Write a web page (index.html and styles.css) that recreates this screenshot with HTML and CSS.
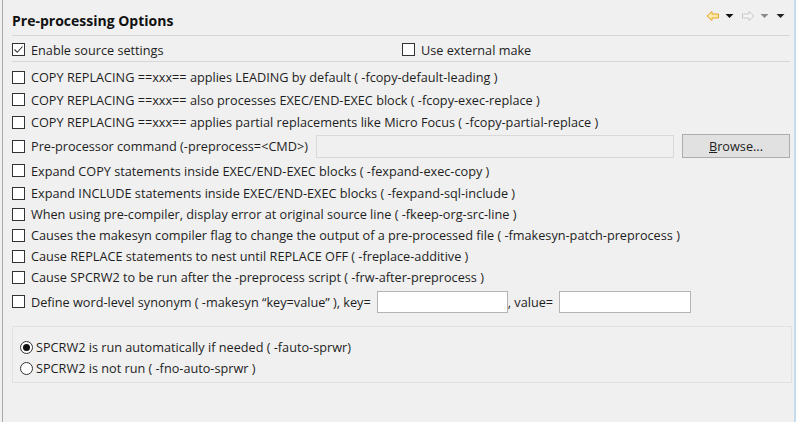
FILE: index.html
```html
<!DOCTYPE html>
<html>
<head>
<meta charset="utf-8">
<link rel="stylesheet" href="styles.css">
</head>
<body>
<div class="page">
  <div class="header">
    <div class="title">Pre-processing Options</div>
    <div class="tools">
      <svg class="ic" width="14" height="12" viewBox="0 0 14 12"><path d="M1 6 L6 1.5 V4 H12.5 V8 H6 V10.5 Z" fill="#fde9a6" stroke="#e2a52a" stroke-width="1"/></svg>
      <svg class="tri" width="9" height="6" viewBox="0 0 9 6"><path d="M0.5 1 H8.5 L4.5 5 Z" fill="#111"/></svg>
      <svg class="ic" width="14" height="12" viewBox="0 0 14 12"><path d="M13 6 L8 1.5 V4 H1.5 V8 H8 V10.5 Z" fill="#f4f4f4" stroke="#c8c8c8" stroke-width="1"/></svg>
      <svg class="tri" width="9" height="6" viewBox="0 0 9 6"><path d="M0.5 1 H8.5 L4.5 5 Z" fill="#8a8a8a"/></svg>
      <svg class="tri" width="9" height="6" viewBox="0 0 9 6"><path d="M0.5 1 H8.5 L4.5 5 Z" fill="#222"/></svg>
    </div>
  </div>
  <div class="toprow">
    <label class="cb cb-enable"><span class="box checked"><svg width="11" height="11" viewBox="0 0 11 11"><path d="M1.5 5.5 L4.3 8.3 L9.5 2.5" fill="none" stroke="#333" stroke-width="1.1"/></svg></span>Enable source settings</label>
    <label class="cb"><span class="box"></span>Use external make</label>
  </div>
  <div class="opts">
    <label class="cb r1"><span class="box"></span>COPY REPLACING ==xxx== applies LEADING by default ( -fcopy-default-leading )</label>
    <label class="cb r1"><span class="box"></span>COPY REPLACING ==xxx== also processes EXEC/END-EXEC block ( -fcopy-exec-replace )</label>
    <label class="cb r1"><span class="box"></span>COPY REPLACING ==xxx== applies partial replacements like Micro Focus ( -fcopy-partial-replace )</label>
    <div class="cmdrow">
      <label class="cb cmdlabel"><span class="box"></span>Pre-processor command (-preprocess=&lt;CMD&gt;)</label>
      <div class="field cmdfield"></div>
      <div class="btn"><u>B</u>rowse...</div>
    </div>
    <label class="cb r2 first"><span class="box"></span>Expand COPY statements inside EXEC/END-EXEC blocks ( -fexpand-exec-copy )</label>
    <label class="cb r2"><span class="box"></span>Expand INCLUDE statements inside EXEC/END-EXEC blocks ( -fexpand-sql-include )</label>
    <label class="cb r2"><span class="box"></span>When using pre-compiler, display error at original source line ( -fkeep-org-src-line )</label>
    <label class="cb r2"><span class="box"></span>Causes the makesyn compiler flag to change the output of a pre-processed file ( -fmakesyn-patch-preprocess )</label>
    <label class="cb r2"><span class="box"></span>Cause REPLACE statements to nest until REPLACE OFF ( -freplace-additive )</label>
    <label class="cb r2"><span class="box"></span>Cause SPCRW2 to be run after the -preprocess script ( -frw-after-preprocess )</label>
    <div class="synrow">
      <label class="cb"><span class="box"></span>Define word-level synonym ( -makesyn “key=value” ), key=</label>
      <div class="field keyfield"></div>
      <span class="vlabel">, value=</span>
      <div class="field valfield"></div>
    </div>
  </div>
  <div class="group">
    <label class="rb"><span class="radio on"></span>SPCRW2 is run automatically if needed ( -fauto-sprwr)</label>
    <label class="rb"><span class="radio"></span>SPCRW2 is not run ( -fno-auto-sprwr )</label>
  </div>
</div>
</body>
</html>
```
FILE: styles.css
```css
html, body {
  margin: 0;
  padding: 0;
  background: #f0f0f0;
}
body {
  font-family: "Open Sans", "Noto Sans", sans-serif;
  font-size: 12.7px;
  color: #1e1e1e;
}
.page {
  width: 794px;
  height: 422px;
  box-sizing: border-box;
  margin-left: 2px;
  border-left: 1px solid #a8a8a8;
  border-right: 2px solid #c5dcef;
  padding: 0 2px 0 9px;
}
.header {
  display: flex;
  align-items: center;
  justify-content: space-between;
  height: 36px;
  border-bottom: 1px solid #d6d6d6;
  padding-top: 2px;
  box-sizing: border-box;
  margin-right: 2px;
}
.title {
  font-size: 14px;
  font-weight: 700;
  color: #111;
  padding-top: 3px;
}
.tools {
  display: flex;
  align-items: center;
  gap: 5px;
  padding-right: 3px;
  margin-top: -6px;
}
.tools .tri { margin-right: 2px; }
.toprow {
  display: flex;
  align-items: center;
  height: 26px;
  padding-top: 2px;
  box-sizing: border-box;
  border-bottom: 1px solid #d6d6d6;
  margin-right: 2px;
}
.cb {
  display: flex;
  align-items: center;
  white-space: nowrap;
}
.cb-enable { width: 390px; }
.box {
  display: inline-flex;
  align-items: center;
  justify-content: center;
  width: 13px;
  height: 13px;
  box-sizing: border-box;
  border: 1px solid #333;
  background: #fff;
  margin-right: 6px;
  flex: none;
}
.opts {
  display: flex;
  flex-direction: column;
  padding-top: 4px;
}
.r1 { height: 22.5px; }
.r2 { height: 21px; }
.r2.first { height: 24px; }
.cmdrow {
  display: flex;
  align-items: center;
  height: 25px;
}
.cmdlabel { width: 304px; flex: none; }
.field {
  height: 22px;
  box-sizing: border-box;
  border: 1px solid #d9d9d9;
  background: #f0f0f0;
  flex: none;
}
.cmdfield { width: 358px; height: 23px; margin-right: 8px; }
.btn {
  width: 108px;
  height: 24px;
  flex: none;
  box-sizing: border-box;
  border: 1px solid #adadad;
  background: #e1e1e1;
  display: flex;
  align-items: center;
  justify-content: center;
  color: #222;
}
.synrow {
  display: flex;
  align-items: center;
  height: 26px;
  margin-top: 1px;
}
.synrow .cb { margin-right: 6px; }
.keyfield, .valfield {
  background: #fff;
  border: 1px solid #b4b4b4;
  height: 22px;
}
.keyfield { width: 131px; }
.valfield { width: 132px; }
.vlabel { margin-right: 6px; }
.group {
  margin-top: 11px;
  height: 57px;
  box-sizing: border-box;
  border: 1px solid #e2e2e2;
  padding: 10px 0 0 7px;
  display: flex;
  flex-direction: column;
}
.rb {
  display: flex;
  align-items: center;
  height: 21px;
  white-space: nowrap;
}
.radio {
  width: 13px;
  height: 13px;
  box-sizing: border-box;
  border: 1px solid #333;
  border-radius: 50%;
  background: #fff;
  margin-right: 3px;
  display: inline-flex;
  align-items: center;
  justify-content: center;
}
.radio.on::after {
  content: "";
  width: 7px;
  height: 7px;
  border-radius: 50%;
  background: #111;
}
```
